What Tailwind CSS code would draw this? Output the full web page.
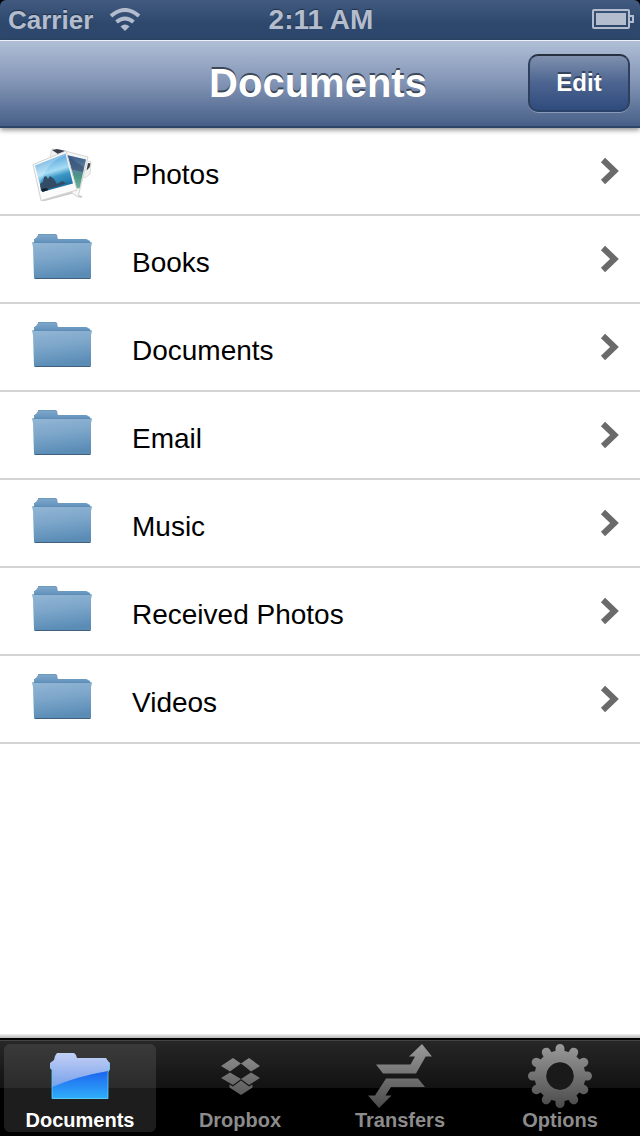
<!DOCTYPE html>
<html lang="en">
  <head>
    <meta charset="UTF-8" />
    <meta name="viewport" content="width=device-width, initial-scale=1" />
    <title>Documents</title>
    <script src="https://cdn.jsdelivr.net/npm/@tailwindcss/browser@4"></script>
  </head>

  <body class="flex min-h-screen flex-col bg-white font-['Liberation_Sans',Arial,sans-serif] text-black">
    <!-- shared icons -->
    <svg class="absolute size-0" aria-hidden="true">
      <defs>
        <linearGradient id="folderBack" x1="0" y1="0" x2="0" y2="1">
          <stop offset="0" stop-color="#82aacd" />
          <stop offset="1" stop-color="#5f90bb" />
        </linearGradient>
        <linearGradient id="folderFront" x1="0" y1="0" x2="0.2" y2="1">
          <stop offset="0" stop-color="#94b7d5" />
          <stop offset="0.5" stop-color="#7ba5c9" />
          <stop offset="1" stop-color="#5a8cb6" />
        </linearGradient>
        <linearGradient id="tabGray" gradientUnits="userSpaceOnUse" x1="0" y1="0" x2="0" y2="64">
          <stop offset="0" stop-color="#9a9a9a" />
          <stop offset="1" stop-color="#4a4a4a" />
        </linearGradient>
      </defs>
      <symbol id="folder" viewBox="0 0 60 60">
        <path d="M2 14V10l2-1 2-3q1-1 2-1h15q2 0 2 2l1 3h28q1 0 2 1l2 1v2z" fill="url(#folderBack)" />
        <path d="M6 5.500h17q2 0 2 2M26 10.500h28" fill="none" stroke="#6c99c0" />
        <path d="M1 13h58q1 0 1 1l-1 4v31q0 1-1 1H3q-1 0-1-1L1 18l-1-4q0-1 1-1z" fill="url(#folderFront)" />
        <path d="M2 13.500h56" stroke="#5f8db6" />
        <path d="M3 49.500h55" stroke="#41607c" />
      </symbol>
      <symbol id="chevron" viewBox="0 0 20 28">
        <path d="M3 3l11.500 11L3 25" fill="none" stroke="#6a6a6a" stroke-width="6" />
      </symbol>
    </svg>

    <div class="bg-black">
      <div class="grid h-10 grid-cols-[1fr_auto_1fr] items-center rounded-t-md bg-linear-to-b from-[#425a7f] to-[#2e486d] to-60% pr-1.5 pl-2 font-bold text-[#b3bdce] text-shadow-[0_-1px_1px_#1f3048]">
        <div class="flex items-center gap-4 text-[26px]">
          <span>Carrier</span>
          <svg class="h-6 w-8" viewBox="0 0 32 24" fill="none" stroke="#b3bdce" stroke-width="4" role="img" aria-label="Wi-Fi">
            <path d="M2 8q14-12 28 0" />
            <path d="M7.500 14q8.500-7 17 0" />
            <path d="M16 23l-4.500-4.500q4.500-4 9 0z" fill="#b3bdce" stroke="none" />
          </svg>
        </div>
        <span class="text-[28px] leading-8">2:11 AM</span>
        <svg class="mb-0.5 h-5 w-[42px] justify-self-end" viewBox="0 0 42 20" fill="none" stroke="#b3bdce" stroke-width="2" role="img" aria-label="Battery full">
          <rect x="1" y="1" width="36" height="18" rx="1" />
          <rect x="4" y="4" width="30" height="12" fill="#b3bdce" stroke="none" />
          <path d="M37 7h4v6h-4" />
        </svg>
      </div>
    </div>

    <header class="relative grid h-22 grid-cols-[1fr_auto_1fr] items-center border-b-2 border-[#2d4469] bg-linear-to-b from-[#b1c0d8] via-[#8294b5] to-[#475f87] px-2.5 shadow-[inset_0_1px_0_#eef2f8,0_2px_5px_#00000073]">
      <h1 class="col-start-2 pr-1 text-[40px] leading-12 font-bold text-white text-shadow-[0_-2px_0_#3c4858]">Documents</h1>
      <button type="button" class="h-[58px] w-[102px] justify-self-end rounded-[10px] border-2 border-t-[#26303f] border-x-[#2f405e] border-b-[#2a4268] bg-linear-to-b from-[#8394b0] via-[#4c6490] to-[#2d4a7c] bg-origin-border text-2xl font-bold text-white shadow-[0_1px_0_#8a9aba] text-shadow-[0_-2px_0_#33435c]">Edit</button>
    </header>

    <main class="flex-1">
      <ul>
        <li>
          <a href="#photos" class="flex h-22 items-center gap-10 border-b-2 border-[#d4d4d4] pr-5 pl-8">
            <svg class="size-[60px]" viewBox="0 0 60 60" aria-hidden="true">
              <defs>
                <linearGradient id="sky" x1="0" y1="0" x2="0.3" y2="1">
                  <stop offset="0" stop-color="#2a83cc" />
                  <stop offset="0.550" stop-color="#a5ddf5" />
                  <stop offset="0.700" stop-color="#3d98c6" />
                  <stop offset="1" stop-color="#1b6fa3" />
                </linearGradient>
                <linearGradient id="hill" x1="0" y1="0" x2="0" y2="1">
                  <stop offset="0" stop-color="#3d5b8a" />
                  <stop offset="0.450" stop-color="#5e87a0" />
                  <stop offset="0.600" stop-color="#4a9384" />
                  <stop offset="1" stop-color="#6fb09c" />
                </linearGradient>
              </defs>
              <path d="M9 60l34-9 3 4 4 1" fill="none" stroke="#000" stroke-opacity="0.200" stroke-width="2" />
              <path d="M18 16l2-8 8 1 31 12-1 12-5 4z" fill="#f1f1f1" stroke="#dcdcdc" />
              <path d="M20 9l5-1 9 2-8 3zM56 22l2.500.5-1 4-3 3z" fill="#39404a" />
              <path d="M33 10l23 6-10 40-6-4z" fill="#f7f7f7" stroke="#d4d4d4" />
              <path d="M35 14l19 4.500-6.500 29-6.500-1z" fill="url(#hill)" />
              <path d="M36 15l8 6 8 5-1 5-13-3z" fill="#344d72" fill-opacity="0.600" />
              <path d="M1 23.500l33-13.500 11 39-36 10.500z" fill="#fbfbfb" stroke="#d2d2d2" />
              <path d="M3 24.500l30.500-12 7.500 30L10 51z" fill="url(#sky)" />
              <path d="M8 43l3-2 1-5 2-1 2 3 2-3 4 3 3 5 5-3 4 2 4-1-14 5-15 4z" fill="#344b66" />
              <path d="M9.500 48l5-1 2 2-6 2z" fill="#13202c" />
              <path d="M3 24.500l30.500-12v2Q15 20 8 43z" fill="#fff" fill-opacity="0.250" />
            </svg>
            <span class="flex-1 pt-2 text-[28px]">Photos</span>
            <svg class="h-7 w-5" aria-hidden="true"><use href="#chevron" /></svg>
          </a>
        </li>
        <li>
          <a href="#books" class="flex h-22 items-center gap-10 border-b-2 border-[#d4d4d4] pr-5 pl-8">
            <svg class="size-[60px]" aria-hidden="true"><use href="#folder" /></svg>
            <span class="flex-1 pt-2 text-[28px]">Books</span>
            <svg class="h-7 w-5" aria-hidden="true"><use href="#chevron" /></svg>
          </a>
        </li>
        <li>
          <a href="#documents" class="flex h-22 items-center gap-10 border-b-2 border-[#d4d4d4] pr-5 pl-8">
            <svg class="size-[60px]" aria-hidden="true"><use href="#folder" /></svg>
            <span class="flex-1 pt-2 text-[28px]">Documents</span>
            <svg class="h-7 w-5" aria-hidden="true"><use href="#chevron" /></svg>
          </a>
        </li>
        <li>
          <a href="#email" class="flex h-22 items-center gap-10 border-b-2 border-[#d4d4d4] pr-5 pl-8">
            <svg class="size-[60px]" aria-hidden="true"><use href="#folder" /></svg>
            <span class="flex-1 pt-2 text-[28px]">Email</span>
            <svg class="h-7 w-5" aria-hidden="true"><use href="#chevron" /></svg>
          </a>
        </li>
        <li>
          <a href="#music" class="flex h-22 items-center gap-10 border-b-2 border-[#d4d4d4] pr-5 pl-8">
            <svg class="size-[60px]" aria-hidden="true"><use href="#folder" /></svg>
            <span class="flex-1 pt-2 text-[28px]">Music</span>
            <svg class="h-7 w-5" aria-hidden="true"><use href="#chevron" /></svg>
          </a>
        </li>
        <li>
          <a href="#received" class="flex h-22 items-center gap-10 border-b-2 border-[#d4d4d4] pr-5 pl-8">
            <svg class="size-[60px]" aria-hidden="true"><use href="#folder" /></svg>
            <span class="flex-1 pt-2 text-[28px]">Received Photos</span>
            <svg class="h-7 w-5" aria-hidden="true"><use href="#chevron" /></svg>
          </a>
        </li>
        <li>
          <a href="#videos" class="flex h-22 items-center gap-10 border-b-2 border-[#d4d4d4] pr-5 pl-8">
            <svg class="size-[60px]" aria-hidden="true"><use href="#folder" /></svg>
            <span class="flex-1 pt-2 text-[28px]">Videos</span>
            <svg class="h-7 w-5" aria-hidden="true"><use href="#chevron" /></svg>
          </a>
        </li>
      </ul>
    </main>

    <!-- tab bar -->
    <div class="h-1 bg-linear-to-b from-[#f0f0f0] to-[#b8b8b8]"></div>
    <nav class="border-t-2 border-black bg-black text-xl leading-6 font-bold text-[#8c8c8c]">
      <div class="grid grid-cols-4 border-t border-[#444] bg-linear-to-b from-[#272727] from-0% via-[#121212] via-50% to-black to-50%">
        <a href="#tab-documents" aria-current="page" class="mx-1 mt-[3px] mb-1 flex flex-col items-center rounded-md bg-linear-to-b from-[#3a3a3a] from-0% via-[#2b2b2b] via-50% to-[#1d1d1d] to-50% text-white">
          <svg class="size-16 overflow-visible" viewBox="0 0 64 64" aria-hidden="true">
            <defs>
              <linearGradient id="blueTop" x1="0" y1="0" x2="0" y2="1">
                <stop offset="0" stop-color="#c3d0f5" />
                <stop offset="0.700" stop-color="#7ba3ec" />
                <stop offset="1" stop-color="#5c94ea" />
              </linearGradient>
              <linearGradient id="blueLow" gradientUnits="userSpaceOnUse" x1="0" y1="27" x2="0" y2="56">
                <stop offset="0" stop-color="#1c63ee" />
                <stop offset="1" stop-color="#31b2fb" />
              </linearGradient>
            </defs>
            <path d="M9 9h17l2 2 1 3h29l2 3 2 2v6l-2 3v27H4V26l-2-2v-5l4-3 1-4z" fill="url(#blueTop)" />
            <path d="M4 43Q30 32 60 27v28H4z" fill="url(#blueLow)" />
            <path d="M61.500 19v6l-1.500 3v26.500H4V26l-1.500-2" fill="none" stroke="#5fd0f7" stroke-opacity="0.800" />
          </svg>
          <span>Documents</span>
        </a>
        <a href="#tab-dropbox" class="mt-[3px] mb-1 flex flex-col items-center">
          <svg class="size-16 overflow-visible" viewBox="0 0 64 64" fill="url(#tabGray)" aria-hidden="true">
            <path d="M25 14l8 5.500-11 8-9-5.500zM41 14l11 8-9 5.500-10-8zM22 28.500l11 6.500-8 6-12-7zM43 28.500l9 5.500-11 7-8-6z" />
            <path d="M33 36.500l8 6 3.500-2v3L33 51l-11.500-7.500v-3l3.500 2z" />
          </svg>
          <span>Dropbox</span>
        </a>
        <a href="#tab-transfers" class="mt-[3px] mb-1 flex flex-col items-center">
          <svg class="size-16 overflow-visible" viewBox="0 0 64 64" fill="url(#tabGray)" aria-hidden="true">
            <path d="M8 20.500h34.500l4.500-8h-6L54 0l10 12.500h-6.300L48 29.500H15z" />
            <path d="M18 34.500h32l7 8.500H23l-5.500 8.500h6L11 64 0 51.500h7z" />
          </svg>
          <span>Transfers</span>
        </a>
        <a href="#tab-options" class="mt-[3px] mb-1 flex flex-col items-center">
          <svg class="size-16 overflow-visible" viewBox="0 0 64 64" aria-hidden="true">
            <mask id="gear">
              <g stroke="#fff" stroke-width="9" stroke-linecap="round">
                <path d="M32 4.500v55M4.500 32h55M18.250 8.200l27.500 47.600M45.750 8.200L18.250 55.800M8.200 18.250l47.600 27.500M8.200 45.750l47.600-27.500" />
              </g>
              <circle cx="32" cy="32" r="25.500" fill="#fff" />
              <circle cx="32" cy="32" r="13.500" fill="#000" />
            </mask>
            <rect width="64" height="64" fill="url(#tabGray)" mask="url(#gear)" />
            <circle cx="32" cy="32" r="13.500" fill="#1a1a1a" />
          </svg>
          <span>Options</span>
        </a>
      </div>
    </nav>
  </body>
</html>
